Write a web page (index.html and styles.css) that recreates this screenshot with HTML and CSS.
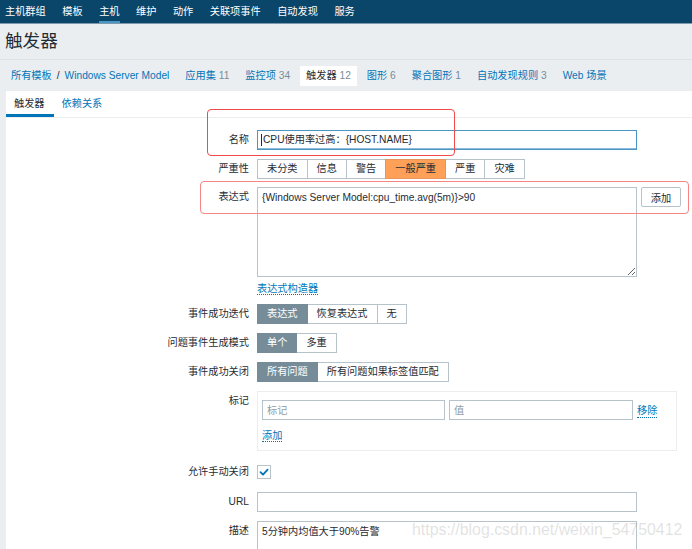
FILE: index.html
```html
<!DOCTYPE html>
<html lang="zh-CN">
<head>
<meta charset="utf-8">
<title>触发器</title>
<link rel="stylesheet" href="styles.css">
</head>
<body>
<nav class="topnav">
  <a class="nav-item">主机群组</a>
  <a class="nav-item">模板</a>
  <a class="nav-item active">主机</a>
  <a class="nav-item">维护</a>
  <a class="nav-item">动作</a>
  <a class="nav-item">关联项事件</a>
  <a class="nav-item">自动发现</a>
  <a class="nav-item">服务</a>
</nav>
<header class="page-header">
  <h1 class="page-title">触发器</h1>
</header>
<nav class="breadcrumbs">
  <span class="crumb"><a class="link">所有模板</a><span class="sep">/</span><a class="link">Windows Server Model</a></span>
  <span class="crumb"><a class="link">应用集</a> <span class="count">11</span></span>
  <span class="crumb"><a class="link">监控项</a> <span class="count">34</span></span>
  <span class="crumb selected">触发器 <span class="count">12</span></span>
  <span class="crumb"><a class="link">图形</a> <span class="count">6</span></span>
  <span class="crumb"><a class="link">聚合图形</a> <span class="count">1</span></span>
  <span class="crumb"><a class="link">自动发现规则</a> <span class="count">3</span></span>
  <span class="crumb"><a class="link">Web 场景</a></span>
</nav>
<main class="content">
  <div class="tabs">
    <span class="tab active">触发器</span>
    <a class="tab link">依赖关系</a>
  </div>
  <form class="form">
    <div class="row">
      <label class="label">名称</label>
      <div class="field">
        <div class="input input-wide focused"><span class="caret"></span>CPU使用率过高：{HOST.NAME}</div>
      </div>
    </div>
    <div class="row">
      <label class="label">严重性</label>
      <div class="field">
        <div class="seg">
          <span class="seg-btn">未分类</span>
          <span class="seg-btn">信息</span>
          <span class="seg-btn">警告</span>
          <span class="seg-btn sev-average">一般严重</span>
          <span class="seg-btn">严重</span>
          <span class="seg-btn">灾难</span>
        </div>
      </div>
    </div>
    <div class="row row-expr">
      <label class="label">表达式</label>
      <div class="field field-col">
        <div class="expr-line">
          <textarea class="textarea" readonly>{Windows Server Model:cpu_time.avg(5m)}>90</textarea>
          <button type="button" class="btn">添加</button>
        </div>
        <div class="below-link"><a class="action-link">表达式构造器</a></div>
      </div>
    </div>
    <div class="row row-after-expr">
      <label class="label">事件成功迭代</label>
      <div class="field">
        <div class="seg">
          <span class="seg-btn on">表达式</span>
          <span class="seg-btn">恢复表达式</span>
          <span class="seg-btn">无</span>
        </div>
      </div>
    </div>
    <div class="row">
      <label class="label">问题事件生成模式</label>
      <div class="field">
        <div class="seg">
          <span class="seg-btn on">单个</span>
          <span class="seg-btn">多重</span>
        </div>
      </div>
    </div>
    <div class="row">
      <label class="label">事件成功关闭</label>
      <div class="field">
        <div class="seg">
          <span class="seg-btn on">所有问题</span>
          <span class="seg-btn">所有问题如果标签值匹配</span>
        </div>
      </div>
    </div>
    <div class="row">
      <label class="label">标记</label>
      <div class="field">
        <div class="tags-box">
          <div class="tag-line">
            <input class="input tag-name" placeholder="标记">
            <input class="input tag-value" placeholder="值">
            <a class="action-link">移除</a>
          </div>
          <div class="tag-add"><a class="action-link">添加</a></div>
        </div>
      </div>
    </div>
    <div class="row row-check">
      <label class="label">允许手动关闭</label>
      <div class="field">
        <span class="checkbox">
          <svg width="12" height="12" viewBox="0 0 12 12"><path d="M2.5 6.2 L5 8.6 L9.6 3.6" fill="none" stroke="#0275b8" stroke-width="1.8" stroke-linecap="round" stroke-linejoin="round"/></svg>
        </span>
      </div>
    </div>
    <div class="row row-url">
      <label class="label">URL</label>
      <div class="field">
        <input class="input input-wide">
      </div>
    </div>
    <div class="row">
      <label class="label">描述</label>
      <div class="field">
        <textarea class="textarea desc" readonly>5分钟内均值大于90%告警</textarea>
      </div>
    </div>
  </form>
  <div class="annot annot-name"></div>
  <div class="annot annot-expr"></div>
  <div class="watermark">https://blog.csdn.net/weixin_54750412</div>
</main>
</body>
</html>
```

FILE: styles.css
```css
* { box-sizing: border-box; }

html, body {
  margin: 0;
  padding: 0;
}

body {
  background: #ebeef1;
  color: #1f2c33;
  font-family: "Liberation Sans", "Noto Sans CJK SC", sans-serif;
  font-size: 10.2px;
  overflow: hidden;
}

a { cursor: pointer; }

.topnav {
  height: 24px;
  background: #0a466a;
  border-bottom: 1px solid #7f9aad;
  display: flex;
  gap: 16.5px;
  padding-left: 5px;
}

.nav-item {
  color: #ffffff;
  line-height: 23px;
  height: 23px;
}

.nav-item.active {
  box-shadow: inset 0 -2px 0 #4796c4;
}

.page-header {
  height: 36px;
  border-bottom: 1px solid #dde2e6;
  padding-left: 5px;
}

.page-title {
  margin: 0;
  font-size: 17.6px;
  font-weight: normal;
  line-height: 35px;
  color: #1f2c33;
}

.breadcrumbs {
  height: 31px;
  display: flex;
  align-items: center;
  gap: 4px;
  padding-left: 5px;
}

.crumb {
  padding: 0 6px;
  line-height: 20px;
  white-space: nowrap;
}

.crumb.selected {
  background: #ffffff;
}

.link { color: #0275b8; }

.sep {
  color: #1f2c33;
  margin: 0 5px 0 5px;
}

.count { color: #768d99; }

.content {
  position: relative;
  margin-left: 6px;
  background: #ffffff;
  min-height: 500px;
}

.tabs {
  display: flex;
  height: 27px;
  border-bottom: 1px solid #ebeef1;
}

.tab {
  height: 26px;
  line-height: 25px;
  padding: 0 8px;
}

.tab:first-child { padding: 0 9px 0 8px; }

.tab.active {
  color: #1f2c33;
  box-shadow: inset 0 -3px 0 #0275b8;
}

.form {
  display: flex;
  flex-direction: column;
  gap: 9px;
  padding-top: 12px;
}

.row {
  display: flex;
  align-items: flex-start;
  gap: 8px;
}

.label {
  width: 243px;
  flex: none;
  text-align: right;
  line-height: 20px;
  color: #1f2c33;
}

.field {
  display: flex;
  align-items: flex-start;
}

.field-col { flex-direction: column; }

.row-expr { margin-top: -1px; }
.row-after-expr { margin-top: -2px; }
.row-check { margin-top: 2px; }
.row-url { margin-top: 1px; }

.input {
  height: 20px;
  border: 1px solid #b7c3ca;
  background: #ffffff;
  padding: 0 4px;
  font: inherit;
  color: #1f2c33;
  line-height: 18px;
  outline: none;
}

.input::placeholder { color: #8f9ca4; }

.input-wide { width: 380px; }

.input.focused {
  border-color: #4796c4;
  box-shadow: inset 0 -1px 0 #8dbad6;
  display: flex;
  align-items: center;
  padding-left: 3px;
}

.caret {
  display: inline-block;
  width: 1px;
  height: 12px;
  background: #1f2c33;
  margin-right: 1px;
}

.seg { display: flex; }

.seg-btn {
  height: 20px;
  line-height: 18px;
  padding: 0 9px;
  border: 1px solid #b7c3ca;
  background: #ffffff;
  color: #1f2c33;
  white-space: nowrap;
}

.seg-btn + .seg-btn { margin-left: -1px; }

.seg-btn.sev-average {
  background: #ffa059;
  border-color: #e9955a;
  position: relative;
  color: #1f2c33;
}

.seg-btn.on {
  background: #768d99;
  border-color: #768d99;
  color: #ffffff;
  position: relative;
}

.expr-line {
  display: flex;
  align-items: flex-start;
  gap: 4px;
}

.textarea {
  width: 380px;
  height: 90px;
  border: 1px solid #b7c3ca;
  padding: 3px 4px;
  font: inherit;
  line-height: 14px;
  color: #1f2c33;
  background: #ffffff;
  resize: both;
  outline: none;
  margin: 0;
  display: block;
}

.textarea.desc { height: 90px; }

.btn {
  width: 40px;
  height: 20px;
  border: 1px solid #b7c3ca;
  background: #ffffff;
  font: inherit;
  color: #1f2c33;
  padding: 0;
  border-radius: 2px;
}

.below-link {
  margin-top: 4px;
  line-height: 16px;
}

.action-link {
  color: #0275b8;
  border-bottom: 1px dotted #0275b8;
}

.tags-box {
  width: 420px;
  height: 60px;
  border: 1px solid #ebeef1;
  padding: 8px 4px 0;
}

.tag-line {
  display: flex;
  align-items: center;
  gap: 4px;
}

.tag-name { width: 183px; }
.tag-value { width: 184px; }

.tag-add {
  margin-top: 8px;
  line-height: 16px;
}

.checkbox {
  width: 14px;
  height: 14px;
  margin-top: 3px;
  border: 1px solid #b7c3ca;
  background: #ffffff;
  display: flex;
  align-items: center;
  justify-content: center;
}

.checkbox svg { display: block; }

.annot {
  position: absolute;
  border-radius: 4px;
  pointer-events: none;
}

.annot-name {
  left: 201px;
  top: 18px;
  width: 248px;
  height: 47px;
  border: 1.5px solid #f04a4a;
}

.annot-expr {
  left: 194px;
  top: 90px;
  width: 489px;
  height: 33px;
  border: 1.5px solid #f78585;
}

.watermark {
  position: absolute;
  left: 406px;
  top: 430px;
  font-family: "Liberation Sans", sans-serif;
  font-size: 15.9px;
  line-height: 18px;
  color: rgba(170, 170, 170, 0.35);
  white-space: nowrap;
  pointer-events: none;
}
```
